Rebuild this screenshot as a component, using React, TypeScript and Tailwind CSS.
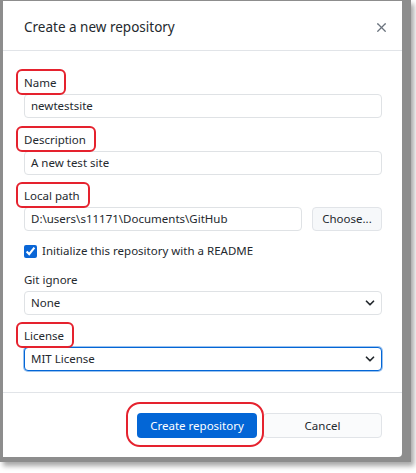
import { ChevronDown, X } from "lucide-react";
import type { ReactNode } from "react";

const font = { fontFamily: '"Noto Sans", "Open Sans", sans-serif' };

const Marked = ({ children }: { children: ReactNode }) => (
  <span className="relative inline-block">
    {children}
    <span className="absolute -left-[8px] -right-[10px] -top-[5px] -bottom-[4px] rounded-[6px] border-2 border-[#e5222e]" />
  </span>
);

const Label = ({ children, marked }: { children: string; marked?: boolean }) => (
  <div className="h-[17px] leading-[17px] text-[11.5px] text-[#24292e] mb-[3px]">
    {marked ? <Marked>{children}</Marked> : children}
  </div>
);

const TextBox = ({ value, className = "" }: { value: string; className?: string }) => (
  <div
    className={`h-[24px] rounded-[4px] border border-[#dfe2e5] bg-white px-[6px] flex items-center text-[11.5px] text-[#24292e] ${className}`}
  >
    {value}
  </div>
);

const Select = ({ value, focused }: { value: string; focused?: boolean }) => (
  <div
    className={`h-[24px] rounded-[4px] border bg-white pl-[6px] pr-[4px] flex items-center justify-between text-[11.5px] text-[#24292e] ${
      focused ? "border-[#0366d6] ring-1 ring-[#0366d6]/40" : "border-[#dfe2e5]"
    }`}
  >
    <span>{value}</span>
    <ChevronDown size={14} strokeWidth={3} className="text-[#24292e]" />
  </div>
);

export default function App() {
  return (
    <div className="w-[416px] h-[473px] bg-white" style={font}>
      <div className="w-[411px] bg-[#8d8d8d] pl-[3px] pt-[1px] pr-[6px] pb-[5px] shadow-[3px_4px_5px_rgba(0,0,0,0.35)]">
        <div className="w-[399px] h-[456px] bg-white rounded-br-[4px] flex flex-col">
          {/* Header */}
          <div className="h-[50px] shrink-0 border-b border-[#e1e4e8] pl-[21px] pr-[13px] pt-[3px] flex items-center justify-between">
            <h1 className="text-[13.5px] text-[#24292e]">Create a new repository</h1>
            <X size={15} strokeWidth={2} className="text-[#6a737d]" />
          </div>

          {/* Form */}
          <div className="flex-1 pl-[21px] pr-[20px] pt-[23px]">
            <Label marked>Name</Label>
            <TextBox value="newtestsite" />

            <div className="mt-[13px]">
              <Label marked>Description</Label>
              <TextBox value="A new test site" />
            </div>

            <div className="mt-[12px]">
              <Label marked>Local path</Label>
              <div className="flex gap-[10px]">
                <TextBox value="D:\users\s11171\Documents\GitHub" className="flex-1" />
                <div className="w-[70px] h-[24px] rounded-[4px] border border-[#e1e4e8] bg-[#f6f8fa] flex items-center justify-center text-[11.5px] text-[#24292e]">
                  Choose...
                </div>
              </div>
            </div>

            <label className="mt-[13px] h-[14px] flex items-center gap-[5px] text-[11.5px] text-[#24292e]">
              <input type="checkbox" defaultChecked className="w-[13px] h-[13px] m-0 accent-[#0a66d6]" />
              Initialize this repository with a README
            </label>

            <div className="mt-[13px]">
              <Label>Git ignore</Label>
              <Select value="None" />
            </div>

            <div className="mt-[12px]">
              <Label marked>License</Label>
              <Select value="MIT License" focused />
            </div>
          </div>

          {/* Footer */}
          <div className="h-[65px] shrink-0 border-t border-[#e1e4e8] pl-[21px] pr-[20px] pt-[20px] flex items-start justify-end gap-[6px]">
            <div className="relative">
              <button className="block w-[120px] h-[25px] rounded-[4px] bg-[#0366d6] text-white text-[11.5px]">
                Create repository
              </button>
              <span className="absolute -left-[11px] -right-[7px] -top-[11px] -bottom-[9px] rounded-[14px] border-2 border-[#e5222e]" />
            </div>
            <button className="block w-[119px] h-[25px] rounded-[4px] border border-[#e1e4e8] bg-[#fafbfc] text-[#24292e] text-[11.5px]">
              Cancel
            </button>
          </div>
        </div>
      </div>
    </div>
  );
}
